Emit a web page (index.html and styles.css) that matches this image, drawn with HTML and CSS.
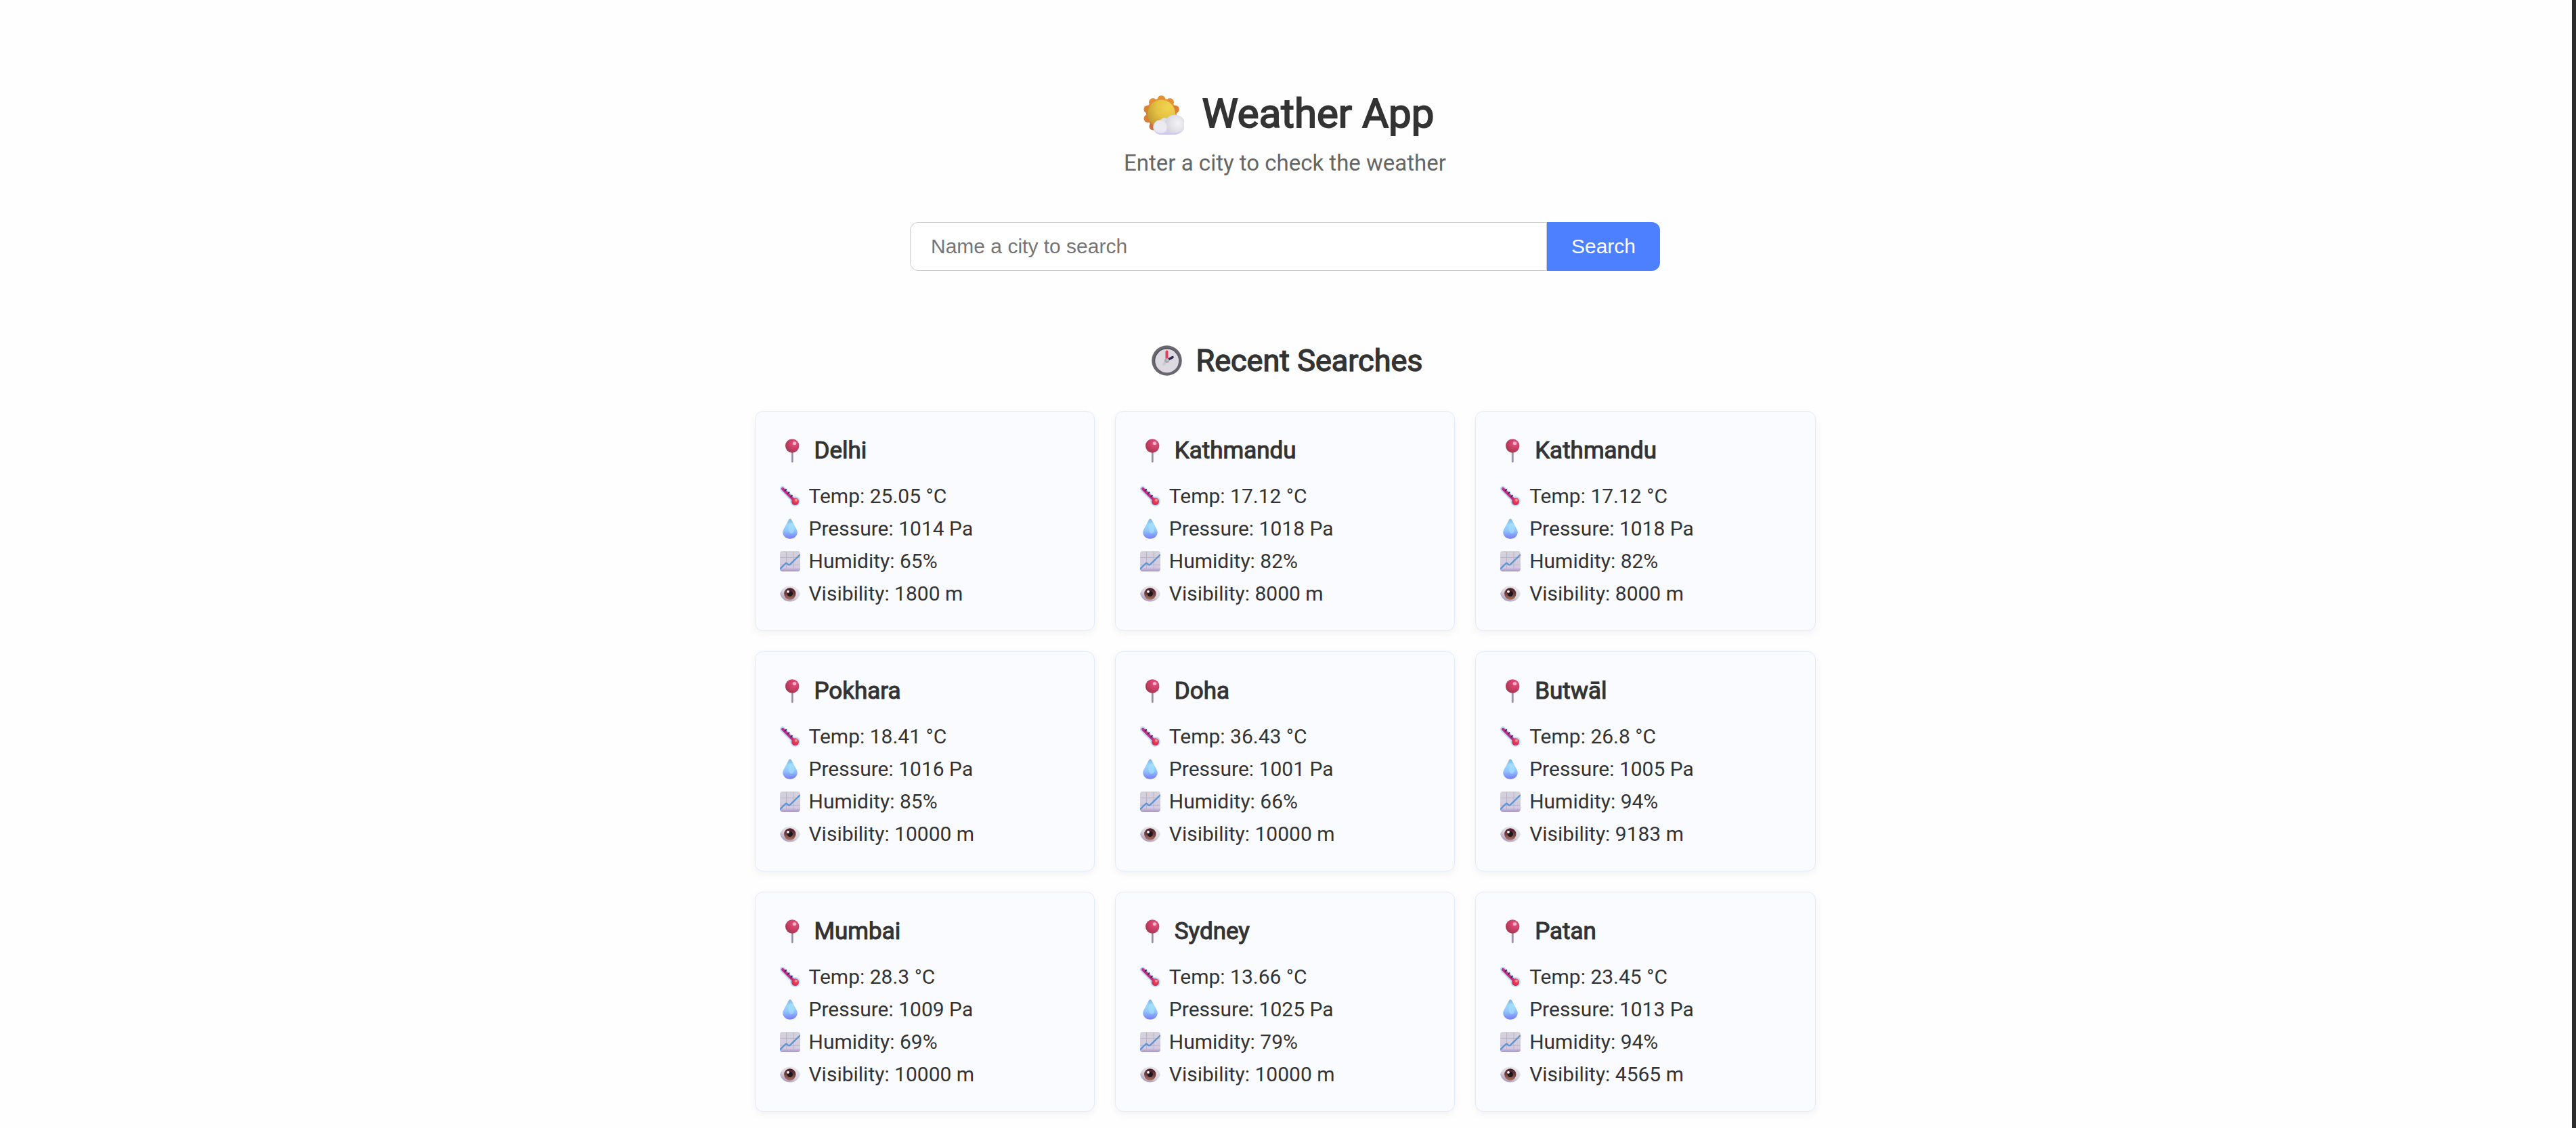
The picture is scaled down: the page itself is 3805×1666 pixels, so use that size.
FILE: index.html
```html
<!DOCTYPE html>
<html lang="en">
<head>
<meta charset="utf-8">
<title>Weather App</title>
<link rel="stylesheet" href="styles.css">
</head>
<body>
<svg class="sprite" aria-hidden="true">
  <defs>
    <linearGradient id="g-rays" x1="0.6" y1="0" x2="0.3" y2="1"><stop offset="0" stop-color="#eb9c3a"/><stop offset="0.5" stop-color="#dd8733"/><stop offset="1" stop-color="#c96f40"/></linearGradient>
    <radialGradient id="g-sun" cx="0.75" cy="0.25" r="0.85"><stop offset="0" stop-color="#f2d44e"/><stop offset="0.5" stop-color="#e6c343"/><stop offset="1" stop-color="#c09a33"/></radialGradient>
    <linearGradient id="g-cloud" x1="0" y1="0" x2="0" y2="1"><stop offset="0" stop-color="#dcdbe0"/><stop offset="0.7" stop-color="#e3e1e8"/><stop offset="1" stop-color="#cfc6f0"/></linearGradient>
    <radialGradient id="g-puff" cx="0.7" cy="0.45" r="0.7"><stop offset="0" stop-color="#f3f2f5"/><stop offset="0.6" stop-color="#e2e1e6"/><stop offset="1" stop-color="#d3cfe2"/></radialGradient>
    <radialGradient id="g-pin" cx="0.68" cy="0.3" r="0.75"><stop offset="0" stop-color="#e25583"/><stop offset="0.5" stop-color="#cf3f69"/><stop offset="1" stop-color="#a13a50"/></radialGradient>
    <linearGradient id="g-needle" x1="0" x2="1" y1="0" y2="0"><stop offset="0" stop-color="#b9b3c3"/><stop offset="1" stop-color="#85758f"/></linearGradient>
    <linearGradient id="g-drop" x1="0.5" y1="0" x2="0.5" y2="1"><stop offset="0" stop-color="#7fb3dc"/><stop offset="0.3" stop-color="#9bd7fb"/><stop offset="0.6" stop-color="#91c4fb"/><stop offset="1" stop-color="#777bf5"/></linearGradient>
    <linearGradient id="g-chart" x1="0" y1="0" x2="0" y2="1"><stop offset="0" stop-color="#d3d1da"/><stop offset="0.8" stop-color="#d4cbe4"/><stop offset="1" stop-color="#a893c6"/></linearGradient>
    <linearGradient id="g-eye" x1="0.8" y1="0" x2="0.2" y2="1"><stop offset="0" stop-color="#ebe9ed"/><stop offset="0.55" stop-color="#d8d4de"/><stop offset="1" stop-color="#a08db6"/></linearGradient>
    <linearGradient id="g-iris" x1="0.5" y1="0" x2="0.4" y2="1"><stop offset="0" stop-color="#4a1a2c"/><stop offset="0.5" stop-color="#743f3b"/><stop offset="1" stop-color="#a87362"/></linearGradient>
    <radialGradient id="g-bulb" cx="0.6" cy="0.35" r="0.7"><stop offset="0" stop-color="#ee5a6e"/><stop offset="0.6" stop-color="#df3350"/><stop offset="1" stop-color="#c52a5e"/></radialGradient>
  </defs>
  <symbol id="i-sun" viewBox="0 0 60 58">
    <circle cx="26.500" cy="26.500" r="22.500" fill="url(#g-rays)"/>
    <g fill="#e29139"><circle cx="26.500" cy="6" r="6"/><circle cx="39" cy="10" r="6"/><circle cx="14" cy="10" r="6"/></g>
    <g fill="#d98235"><circle cx="6.500" cy="20.500" r="6"/><circle cx="46.800" cy="20.500" r="6"/><circle cx="6.500" cy="34" r="6"/></g>
    <circle cx="14.500" cy="45.500" r="6" fill="#cb713f"/>
    <circle cx="26.500" cy="27" r="20.500" fill="url(#g-sun)"/>
    <circle cx="31" cy="40" r="7" fill="#e0dfe4"/>
    <path d="M25 36a10.500 10.500 0 0 1 8 3a14.500 14.500 0 1 1 12 18.500H25a10.700 10.700 0 0 1 0-21.500z" fill="url(#g-cloud)"/>
    <circle cx="45.500" cy="42.700" r="14" fill="url(#g-puff)"/>
    <circle cx="25.500" cy="46.500" r="9.500" fill="#f3f2f6" opacity="0.6"/>
    <path d="M17 53.500q4 2 10 2h18q6 0 10-3q-4 5.200-10 5.300H26q-5 0-9-4.300z" fill="#cfc7f1"/>
  </symbol>
  <symbol id="i-clock" viewBox="0 0 45 45">
    <circle cx="22.500" cy="22.500" r="22.300" fill="#68666f"/>
    <circle cx="22.500" cy="22.500" r="18.300" fill="#4d4757"/>
    <circle cx="22.700" cy="23" r="17.500" fill="#dcd9e1"/>
    <path d="M22 23l-4 5" stroke="#cdc9d4" stroke-width="4" stroke-linecap="round"/>
    <path d="M23 22l8-4.300" stroke="#332c56" stroke-width="3.600" stroke-linecap="round"/>
    <path d="M22.500 22V9.500" stroke="#d9435f" stroke-width="4" stroke-linecap="round"/>
    <circle cx="22.500" cy="22.500" r="3.500" fill="#aaa5af"/>
    <circle cx="23" cy="21.500" r="1.500" fill="#c2bec7"/>
  </symbol>
  <symbol id="i-pin" viewBox="0 0 36 36">
    <rect x="16.700" y="19" width="2.900" height="16.200" rx="1.400" fill="url(#g-needle)"/>
    <circle cx="18.200" cy="10.500" r="10.200" fill="url(#g-pin)"/>
    <ellipse cx="21.500" cy="6.700" rx="2.800" ry="2.500" fill="#f5c3d2" opacity="0.850"/>
  </symbol>
  <symbol id="i-thermo" viewBox="0 0 30 30">
    <path d="M3.900 3.900L21 21" stroke="#bcd9fa" stroke-width="7.800" stroke-linecap="round"/>
    <circle cx="22.600" cy="22.600" r="7.400" fill="#bcd9fa"/>
    <path d="M4.100 4.100L22 22" stroke="#c42d80" stroke-width="4.200" stroke-linecap="round"/>
    <circle cx="22.600" cy="22.600" r="5.400" fill="url(#g-bulb)"/>
    <circle cx="24" cy="20.700" r="1.900" fill="#f296a5"/>
    <path d="M7.500 6.500l1.700-1.700M11.900 10.900l1.700-1.700M16.300 15.300l1.700-1.700" stroke="#302550" stroke-width="1.800" stroke-linecap="round"/>
  </symbol>
  <symbol id="i-drop" viewBox="0 0 30 30">
    <path d="M15 0.200c1.300 0 1.900 1 2.500 2.200l6.600 12.500c1.200 2.300 1.700 3.600 1.700 5.100c0 5.500-4.700 9.800-10.800 9.800s-10.800-4.300-10.800-9.800c0-1.500.5-2.800 1.700-5.100l6.600-12.500c.6-1.200 1.200-2.200 2.500-2.200z" fill="url(#g-drop)"/>
    <ellipse cx="17" cy="14" rx="4.500" ry="8" fill="#a9e3ff" opacity="0.550"/>
  </symbol>
  <symbol id="i-chart" viewBox="0 0 30 30">
    <rect width="30" height="30" rx="4" fill="url(#g-chart)"/>
    <path d="M9.500 1v27M20 1v27M0.500 9.500h29M0.500 20.300h29" stroke="#b9b3c4" stroke-width="1"/>
    <path d="M0 26.500L8.300 18.200q1-1 2 0l2 1.700q1.200 1 2.400 0L30 5" fill="none" stroke="#5a93d2" stroke-width="2.300"/>
  </symbol>
  <symbol id="i-eye" viewBox="0 0 30 30">
    <path d="M0 15C2 8 8 3.500 15 3.500s13 4.500 15 11.500C28 22 22 26.500 15 26.500S2 22 0 15z" fill="url(#g-eye)"/>
    <circle cx="14.800" cy="15" r="8.700" fill="url(#g-iris)"/>
    <circle cx="14.800" cy="14.800" r="4.200" fill="#20171d"/>
    <circle cx="12" cy="11.800" r="1.900" fill="#fff"/>
  </symbol>
</svg>
<div class="screen">
  <main class="app">
    <h1 class="app-title"><svg class="icon-sun"><use href="#i-sun"/></svg><span>Weather App</span></h1>
    <p class="subtitle">Enter a city to check the weather</p>
    <form class="search">
      <input class="search-input" type="text" placeholder="Name a city to search">
      <button class="search-button" type="button">Search</button>
    </form>
    <h2 class="section-title"><svg class="icon-clock"><use href="#i-clock"/></svg><span>Recent Searches</span></h2>
    <section class="cards">
      <article class="card">
        <h3 class="city"><svg class="icon-pin"><use href="#i-pin"/></svg>Delhi</h3>
        <p class="row"><svg class="icon"><use href="#i-thermo"/></svg>Temp: 25.05 °C</p>
        <p class="row"><svg class="icon"><use href="#i-drop"/></svg>Pressure: 1014 Pa</p>
        <p class="row"><svg class="icon"><use href="#i-chart"/></svg>Humidity: 65%</p>
        <p class="row"><svg class="icon"><use href="#i-eye"/></svg>Visibility: 1800 m</p>
      </article>
      <article class="card">
        <h3 class="city"><svg class="icon-pin"><use href="#i-pin"/></svg>Kathmandu</h3>
        <p class="row"><svg class="icon"><use href="#i-thermo"/></svg>Temp: 17.12 °C</p>
        <p class="row"><svg class="icon"><use href="#i-drop"/></svg>Pressure: 1018 Pa</p>
        <p class="row"><svg class="icon"><use href="#i-chart"/></svg>Humidity: 82%</p>
        <p class="row"><svg class="icon"><use href="#i-eye"/></svg>Visibility: 8000 m</p>
      </article>
      <article class="card">
        <h3 class="city"><svg class="icon-pin"><use href="#i-pin"/></svg>Kathmandu</h3>
        <p class="row"><svg class="icon"><use href="#i-thermo"/></svg>Temp: 17.12 °C</p>
        <p class="row"><svg class="icon"><use href="#i-drop"/></svg>Pressure: 1018 Pa</p>
        <p class="row"><svg class="icon"><use href="#i-chart"/></svg>Humidity: 82%</p>
        <p class="row"><svg class="icon"><use href="#i-eye"/></svg>Visibility: 8000 m</p>
      </article>
      <article class="card">
        <h3 class="city"><svg class="icon-pin"><use href="#i-pin"/></svg>Pokhara</h3>
        <p class="row"><svg class="icon"><use href="#i-thermo"/></svg>Temp: 18.41 °C</p>
        <p class="row"><svg class="icon"><use href="#i-drop"/></svg>Pressure: 1016 Pa</p>
        <p class="row"><svg class="icon"><use href="#i-chart"/></svg>Humidity: 85%</p>
        <p class="row"><svg class="icon"><use href="#i-eye"/></svg>Visibility: 10000 m</p>
      </article>
      <article class="card">
        <h3 class="city"><svg class="icon-pin"><use href="#i-pin"/></svg>Doha</h3>
        <p class="row"><svg class="icon"><use href="#i-thermo"/></svg>Temp: 36.43 °C</p>
        <p class="row"><svg class="icon"><use href="#i-drop"/></svg>Pressure: 1001 Pa</p>
        <p class="row"><svg class="icon"><use href="#i-chart"/></svg>Humidity: 66%</p>
        <p class="row"><svg class="icon"><use href="#i-eye"/></svg>Visibility: 10000 m</p>
      </article>
      <article class="card">
        <h3 class="city"><svg class="icon-pin"><use href="#i-pin"/></svg>Butwāl</h3>
        <p class="row"><svg class="icon"><use href="#i-thermo"/></svg>Temp: 26.8 °C</p>
        <p class="row"><svg class="icon"><use href="#i-drop"/></svg>Pressure: 1005 Pa</p>
        <p class="row"><svg class="icon"><use href="#i-chart"/></svg>Humidity: 94%</p>
        <p class="row"><svg class="icon"><use href="#i-eye"/></svg>Visibility: 9183 m</p>
      </article>
      <article class="card">
        <h3 class="city"><svg class="icon-pin"><use href="#i-pin"/></svg>Mumbai</h3>
        <p class="row"><svg class="icon"><use href="#i-thermo"/></svg>Temp: 28.3 °C</p>
        <p class="row"><svg class="icon"><use href="#i-drop"/></svg>Pressure: 1009 Pa</p>
        <p class="row"><svg class="icon"><use href="#i-chart"/></svg>Humidity: 69%</p>
        <p class="row"><svg class="icon"><use href="#i-eye"/></svg>Visibility: 10000 m</p>
      </article>
      <article class="card">
        <h3 class="city"><svg class="icon-pin"><use href="#i-pin"/></svg>Sydney</h3>
        <p class="row"><svg class="icon"><use href="#i-thermo"/></svg>Temp: 13.66 °C</p>
        <p class="row"><svg class="icon"><use href="#i-drop"/></svg>Pressure: 1025 Pa</p>
        <p class="row"><svg class="icon"><use href="#i-chart"/></svg>Humidity: 79%</p>
        <p class="row"><svg class="icon"><use href="#i-eye"/></svg>Visibility: 10000 m</p>
      </article>
      <article class="card">
        <h3 class="city"><svg class="icon-pin"><use href="#i-pin"/></svg>Patan</h3>
        <p class="row"><svg class="icon"><use href="#i-thermo"/></svg>Temp: 23.45 °C</p>
        <p class="row"><svg class="icon"><use href="#i-drop"/></svg>Pressure: 1013 Pa</p>
        <p class="row"><svg class="icon"><use href="#i-chart"/></svg>Humidity: 94%</p>
        <p class="row"><svg class="icon"><use href="#i-eye"/></svg>Visibility: 4565 m</p>
      </article>
    </section>
  </main>
  <div class="edge"></div>
</div>
</body>
</html>
```
FILE: styles.css
```css
* {
  box-sizing: border-box;
}

body {
  margin: 0;
  background: #fefefe;
  color: #333;
  font-family: Roboto, "Liberation Sans", sans-serif;
  font-size: 30px;
  line-height: 48px;
}

h1,
h2,
h3,
p {
  margin: 0;
  font-weight: 400;
}

svg {
  flex: none;
}

.sprite {
  position: absolute;
  width: 0;
  height: 0;
}

.screen {
  display: flex;
  height: 1666px;
  overflow: hidden;
}

.app {
  flex: 1;
  display: flex;
  flex-direction: column;
  align-items: center;
  padding: 132px 3px 0 0;
}

.edge {
  width: 6px;
  background: #2c2c2c;
}

.app-title {
  display: flex;
  align-items: center;
  gap: 26px;
  padding-left: 12px;
  font-size: 60px;
  line-height: 72px;
  -webkit-text-stroke: 1.9px #333;
}

.icon-sun {
  width: 60px;
  height: 58px;
  margin-top: 3px;
}

.subtitle {
  margin-top: 10px;
  color: #666;
  font-size: 33px;
  line-height: 53px;
}

.search {
  display: flex;
  width: 1108px;
  height: 72px;
  margin-top: 61px;
}

.search-input,
.search-button {
  margin: 0;
  font-family: "Liberation Sans", Arial, sans-serif;
  font-size: 30px;
}

.search-input {
  flex: 1;
  min-width: 0;
  padding: 0 30px;
  border: 1px solid #ccc;
  border-radius: 12px 0 0 12px;
  background: #fff;
  outline: none;
}

.search-input::placeholder {
  color: #757575;
}

.search-button {
  width: 167px;
  padding: 0;
  border: 0;
  border-radius: 0 12px 12px 0;
  background: #4d80ff;
  color: #fff;
}

.section-title {
  display: flex;
  align-items: center;
  gap: 20px;
  margin-top: 98px;
  padding-left: 7px;
  font-size: 45px;
  line-height: 70px;
  -webkit-text-stroke: 1.4px #333;
}

.icon-clock {
  width: 45px;
  height: 45px;
  margin-bottom: 1px;
}

.cards {
  display: grid;
  grid-template-columns: repeat(3, 1fr);
  gap: 30px;
  width: 1567px;
  margin-top: 39px;
}

.card {
  height: 325px;
  padding: 29px 35px 29px 36px;
  border: 1px solid #e0eaff;
  border-radius: 12px;
  background: #fafbff;
  box-shadow: 0 4px 12px rgba(0, 0, 0, 0.05);
}

.city {
  display: flex;
  align-items: center;
  gap: 15px;
  margin-bottom: 14px;
  font-size: 35px;
  line-height: 58px;
  -webkit-text-stroke: 1.1px #333;
}

.icon-pin {
  width: 36px;
  height: 36px;
}

.row {
  display: flex;
  align-items: center;
  gap: 13px;
}

.icon {
  width: 30px;
  height: 30px;
}
```
